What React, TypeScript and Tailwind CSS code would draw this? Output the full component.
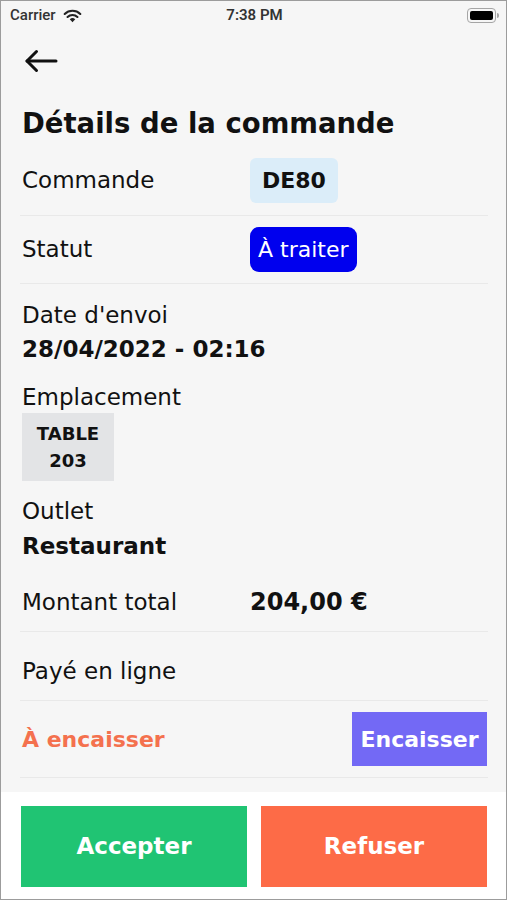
import React from 'react';

const font = { fontFamily: '"DejaVu Sans", Verdana, sans-serif' };

function StatusBar() {
  return (
    <div className="h-[29px] flex items-center justify-between pl-[9px] pr-[7px] text-[15px] text-[#333]" style={{ fontFamily: 'Roboto, sans-serif' }}>
      <div className="flex items-center gap-[7px] w-[120px]">
        <span className="font-medium">Carrier</span>
        <svg width="19" height="14" viewBox="0 0 18 13">
          <path d="M9 12.5 L6.4 9.6 A3.8 3.8 0 0 1 11.6 9.6 Z" fill="#222" />
          <path d="M4.3 7.4 A6.8 6.8 0 0 1 13.7 7.4" stroke="#222" strokeWidth="2" fill="none" strokeLinecap="round" />
          <path d="M1.6 4.6 A10.6 10.6 0 0 1 16.4 4.6" stroke="#222" strokeWidth="2" fill="none" strokeLinecap="round" />
        </svg>
      </div>
      <span className="font-semibold">7:38 PM</span>
      <div className="w-[120px] flex justify-end">
        <div className="flex items-center">
          <div className="w-[29px] h-[15px] rounded-[4px] border border-[#a5a5a5] p-[2px]">
            <div className="w-full h-full rounded-[2px] bg-black" />
          </div>
          <div className="w-[2px] h-[5px] bg-[#a5a5a5] rounded-r-sm ml-[1px]" />
        </div>
      </div>
    </div>
  );
}

function Divider() {
  return <div className="h-px bg-[#e9e9e9] ml-[19px] mr-[18px]" />;
}

function BackArrow() {
  return (
    <svg width="34" height="24" viewBox="0 0 34 24" fill="none" stroke="#111" strokeWidth="3" strokeLinecap="round" strokeLinejoin="round">
      <path d="M32 12 H3" />
      <path d="M12.5 2.5 L3 12 L12.5 21.5" />
    </svg>
  );
}

export default function App() {
  return (
    <div className="w-[507px] h-[900px] box-border border border-[#9c9c9c] bg-[#f6f6f6] flex flex-col overflow-hidden text-[#111]" style={font}>
      <StatusBar />
      <div className="flex-1 flex flex-col">
        <div className="h-[62px] flex items-center pl-[23px]">
          <BackArrow />
        </div>
        <h1 className="pl-[21px] mt-[14px] text-[27.5px] font-bold leading-[34px]">Détails de la commande</h1>

        <div className="pl-[21px] h-[75px] pt-[6px] flex items-center">
          <span className="w-[228px] text-[23px]">Commande</span>
          <span className="bg-[#dbedf9] rounded-[6px] h-[45px] px-[12px] flex items-center text-[22px] font-bold">DE80</span>
        </div>
        <Divider />
        <div className="pl-[21px] h-[67px] flex items-center">
          <span className="w-[228px] text-[23px]">Statut</span>
          <span className="bg-[#0000ee] text-white rounded-[9px] h-[45px] px-[8px] flex items-center text-[22px]">À traiter</span>
        </div>
        <Divider />

        <div className="pl-[21px] pt-[16px] flex flex-col items-start">
          <div className="text-[23px] leading-[30px]">Date d'envoi</div>
          <div className="text-[23px] font-bold leading-[30px] mt-[4px]">28/04/2022 - 02:16</div>
          <div className="text-[23px] leading-[30px] mt-[18px]">Emplacement</div>
          <div className="mt-px w-[92px] h-[68px] bg-[#e3e4e6] flex flex-col items-center justify-center text-[18px] font-bold leading-[27px]">
            <span>TABLE</span>
            <span>203</span>
          </div>
          <div className="text-[23px] leading-[30px] mt-[15px]">Outlet</div>
          <div className="text-[23px] font-bold leading-[30px] mt-[5px]">Restaurant</div>
        </div>
        <div className="pl-[21px] h-[58px] mt-[12px] flex items-center">
          <span className="w-[228px] text-[23px]">Montant total</span>
          <span className="text-[24px] font-bold">204,00 €</span>
        </div>
        <Divider />
        <div className="pl-[21px] h-[68px] pt-[10px] flex items-center">
          <span className="text-[23px]">Payé en ligne</span>
        </div>
        <Divider />
        <div className="pl-[21px] pr-[19px] h-[76px] flex items-center justify-between">
          <span className="text-[22px] font-bold text-[#f4714e]">À encaisser</span>
          <button className="bg-[#7369f5] text-white text-[22px] font-bold h-[54px] w-[135px] flex items-center justify-center">Encaisser</button>
        </div>
        <Divider />
      </div>
      <div className="bg-white flex gap-[14px] pl-[20px] pr-[19px] pt-[14px] pb-[12px]">
        <button className="flex-1 h-[81px] bg-[#20c473] text-white text-[23px] font-bold">Accepter</button>
        <button className="flex-1 h-[81px] bg-[#fd6b47] text-white text-[23px] font-bold">Refuser</button>
      </div>
    </div>
  );
}
